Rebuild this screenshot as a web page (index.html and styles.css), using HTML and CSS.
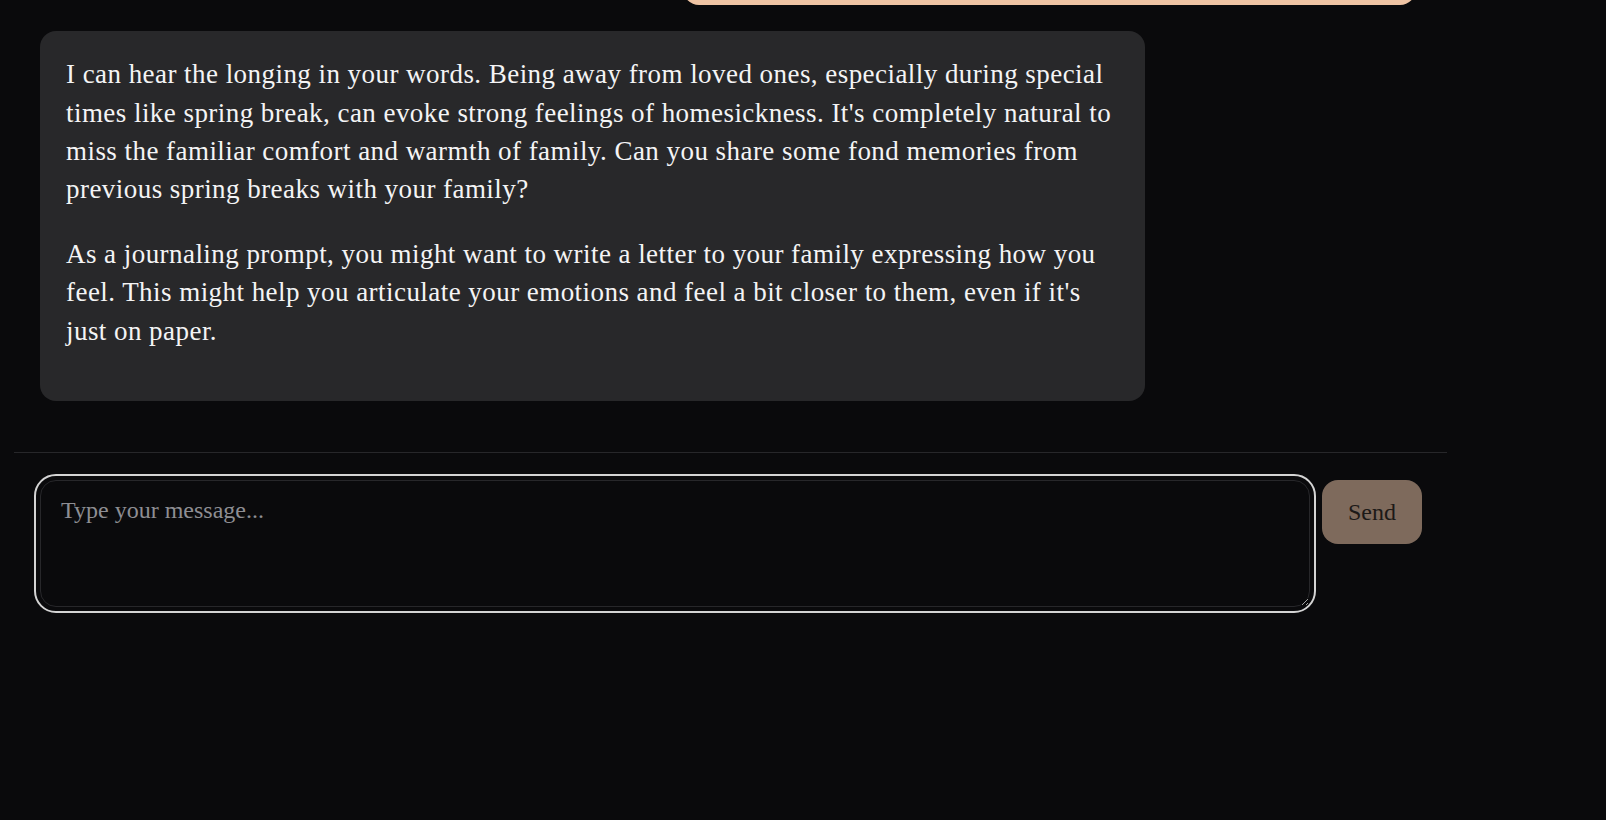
FILE: index.html
```html
<!DOCTYPE html>
<html lang="en">
<head>
<meta charset="utf-8">
<title>Journal Chat</title>
<link rel="stylesheet" href="styles.css">
</head>
<body>
<div class="app">
  <div class="messages">
    <div class="message message-user">
      <p>I really miss my family. Everyone is going home for spring break and I can't this year.</p>
    </div>
    <div class="message message-bot">
      <p>I can hear the longing in your words. Being away from loved ones, especially during special times like spring break, can evoke strong feelings of homesickness. It's completely natural to miss the familiar comfort and warmth of family. Can you share some fond memories from previous spring breaks with your family?</p>
      <p>As a journaling prompt, you might want to write a letter to your family expressing how you feel. This might help you articulate your emotions and feel a bit closer to them, even if it's just on paper.</p>
    </div>
  </div>
  <form class="composer">
    <textarea class="composer-input" placeholder="Type your message..."></textarea>
    <button type="button" class="composer-send">Send</button>
  </form>
</div>
</body>
</html>
```

FILE: styles.css
```css
html, body {
  margin: 0;
  padding: 0;
  background: #0a0a0c;
}

body {
  font-family: "Liberation Serif", "Times New Roman", serif;
  color: #f4f4f5;
  height: 820px;
  overflow: hidden;
}

.app {
  width: 1433px;
  margin-left: 14px;
  display: flex;
  flex-direction: column;
}

.messages {
  height: 452px;
  overflow: hidden;
  display: flex;
  flex-direction: column;
  justify-content: flex-end;
  gap: 26px;
  padding: 0 31px 51px 26px;
  box-sizing: border-box;
}

.message {
  border-radius: 16px;
  padding: 24px 24px 25px 26px;
  box-sizing: border-box;
  font-size: 27px;
  line-height: 38.4px;
  letter-spacing: 0.45px;
  flex-shrink: 0;
}

.message p {
  margin: 0 0 26px;
}

.message-user {
  align-self: flex-end;
  width: 733px;
  background: #efc4a4;
  color: #1c1917;
}

.message-user p {
  margin: 0;
}

.message-bot {
  align-self: flex-start;
  width: 1105px;
  background: #28282a;
}

.composer {
  display: flex;
  align-items: flex-start;
  gap: 12px;
  border-top: 1px solid #27272a;
  padding: 27px 25px 0 26px;
  margin: 0;
}

.composer-input {
  flex: 1;
  height: 127px;
  box-sizing: border-box;
  background: #0a0a0c;
  color: #f4f4f5;
  border: 1px solid #27272a;
  border-radius: 16px;
  outline: 2px solid #d4d4d4;
  outline-offset: 4px;
  padding: 10px 20px;
  font-family: "Liberation Serif", "Times New Roman", serif;
  font-size: 24px;
  line-height: 1.6;
  color-scheme: dark;
  resize: vertical;
}

.composer-input::placeholder {
  color: #8e8e93;
}

.composer-send {
  height: 64px;
  padding: 0 26px;
  border: none;
  border-radius: 16px;
  background: #7e6a5c;
  color: #1c1917;
  font-family: "Liberation Serif", "Times New Roman", serif;
  font-size: 24px;
  line-height: 1.6;
  cursor: pointer;
}
```
